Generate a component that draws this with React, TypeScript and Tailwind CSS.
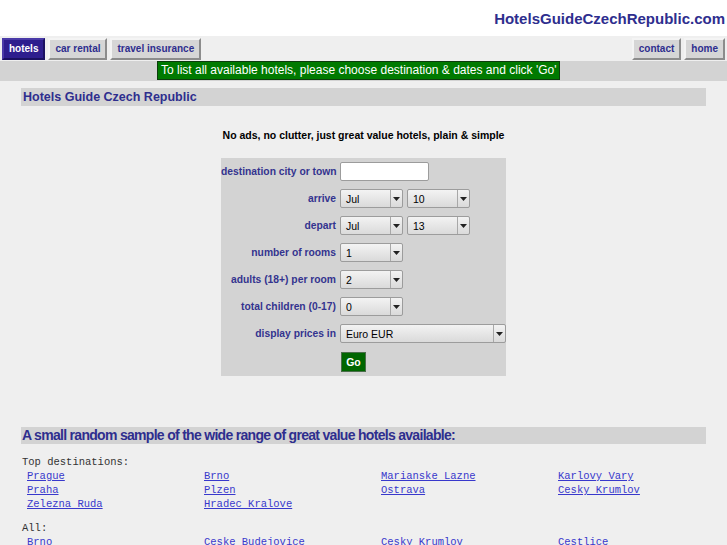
import React from 'react';

const navLeft = ['hotels', 'car rental', 'travel insurance'];
const navRight = ['contact', 'home'];

const topDest = ['Prague', 'Brno', 'Marianske Lazne', 'Karlovy Vary', 'Praha', 'Plzen', 'Ostrava', 'Cesky Krumlov', 'Zelezna Ruda', 'Hradec Kralove'];
const allDest = ['Brno', 'Ceske Budejovice', 'Cesky Krumlov', 'Cestlice', 'Frydek-Mistek', 'Harrachov', 'Hradec Kralove', 'Jihlava'];

function NavButton({ label, active }: { label: string; active?: boolean }) {
  return (
    <span
      className={`h-[22px] px-[5px] flex items-center text-[10px] font-bold border-2 ${
        active
          ? 'bg-[#2e1e8e] text-white border-t-[#4a3aa8] border-l-[#4a3aa8] border-b-[#1a1060] border-r-[#1a1060]'
          : 'bg-[#d6d6d6] text-[#2e2e8e] border-t-[#f4f4f4] border-l-[#f4f4f4] border-b-[#8c8c8c] border-r-[#8c8c8c]'
      }`}
    >
      {label}
    </span>
  );
}

function Select({ value, width }: { value: string; width: string }) {
  return (
    <div className={`${width} h-[19px] flex border border-[#9c9c9c] rounded-[2px] bg-gradient-to-b from-[#f3f3f3] to-[#dadada] text-[10.5px] text-black`}>
      <span className="flex-1 pl-[5px] leading-[19px]">{value}</span>
      <span className="w-[12px] border-l border-[#a8a8a8] flex items-center justify-center">
        <svg width="7" height="4" viewBox="0 0 7 4">
          <path d="M0 0h7L3.5 4z" fill="#222" />
        </svg>
      </span>
    </div>
  );
}

function Row({ label, children }: { label: string; children: React.ReactNode }) {
  return (
    <>
      <div className="text-right text-[10.3px] font-bold text-[#33338f] whitespace-nowrap pr-[1px]">{label}</div>
      <div className="flex gap-[4px] h-[19px]">{children}</div>
    </>
  );
}

function LinkGrid({ items }: { items: string[] }) {
  return (
    <div className="grid grid-cols-[177px_177px_177px_177px] ml-[6px]">
      {items.map((d, i) => (
        <a key={i} href="#" className="leading-[14px] text-[#3838cc] underline">
          {d}
        </a>
      ))}
    </div>
  );
}

export default function App() {
  return (
    <div className="w-[727px] h-[545px] overflow-hidden bg-[#efefef] font-['Liberation_Sans',Arial,sans-serif]">
      <div className="h-[36px] bg-white flex justify-end items-start pt-[8px] pr-[2px]">
        <span className="text-[15px] font-bold text-[#2e2e8e]">HotelsGuideCzechRepublic.com</span>
      </div>

      <div className="h-[25px] flex items-center justify-between px-[2px]">
        <div className="flex gap-[3px]">
          {navLeft.map((n, i) => (
            <NavButton key={n} label={n} active={i === 0} />
          ))}
        </div>
        <div className="flex gap-[3px]">
          {navRight.map((n) => (
            <NavButton key={n} label={n} />
          ))}
        </div>
      </div>

      <div className="h-[20px] bg-[#d3d3d3] pl-[157px]">
        <div className="w-fit h-[19px] px-[3px] bg-[#007a00] border border-[#0c3d0c] text-white text-[12px] leading-[17px]">
          To list all available hotels, please choose destination &amp; dates and click 'Go'
        </div>
      </div>

      <div className="px-[21px] pt-[7px]">
        <div className="h-[18px] bg-[#d3d3d3] pl-[2px] text-[12.5px] font-bold text-[#2e2e8e] leading-[18px]">
          Hotels Guide Czech Republic
        </div>

        <p className="mt-[23px] text-center text-[10.5px] font-bold text-black leading-[13px]">
          No ads, no clutter, just great value hotels, plain &amp; simple
        </p>

        <div className="mt-[16px] mx-auto w-[285px] bg-[#d3d3d3] pt-[4px] pb-[5px]">
          <div className="grid grid-cols-[116px_1fr] gap-x-[3px] gap-y-[8px] items-center">
            <Row label="destination city or town">
              <input className="block w-[89px] h-[19px] bg-white border border-[#9c9c9c] rounded-[2px]" />
            </Row>
            <Row label="arrive">
              <Select value="Jul" width="w-[63px]" />
              <Select value="10" width="w-[63px]" />
            </Row>
            <Row label="depart">
              <Select value="Jul" width="w-[63px]" />
              <Select value="13" width="w-[63px]" />
            </Row>
            <Row label="number of rooms">
              <Select value="1" width="w-[63px]" />
            </Row>
            <Row label="adults (18+) per room">
              <Select value="2" width="w-[63px]" />
            </Row>
            <Row label="total children (0-17)">
              <Select value="0" width="w-[63px]" />
            </Row>
            <Row label="display prices in">
              <Select value="Euro EUR" width="w-[166px]" />
            </Row>
            <div />
            <div className="h-[20px] pt-[1px]">
              <button className="block ml-[1px] w-[25px] h-[20px] bg-[#006600] border border-[#4a6e4a] text-white text-[10.5px] font-bold leading-[18px]">
                Go
              </button>
            </div>
          </div>
        </div>

        <div className="mt-[51px] h-[17px] bg-[#d3d3d3] pl-[1px] text-[14px] tracking-[-0.7px] font-bold text-[#2e2e8e] leading-[17px]">
          A small random sample of the wide range of great value hotels available:
        </div>

        <div className="font-['Liberation_Mono','Courier_New',monospace] text-[10.5px] text-[#333]">
          <div className="mt-[11px] ml-[1px] leading-[14px]">Top destinations:</div>
          <LinkGrid items={topDest} />
          <div className="mt-[10px] ml-[1px] leading-[14px]">All:</div>
          <LinkGrid items={allDest} />
        </div>
      </div>
    </div>
  );
}
